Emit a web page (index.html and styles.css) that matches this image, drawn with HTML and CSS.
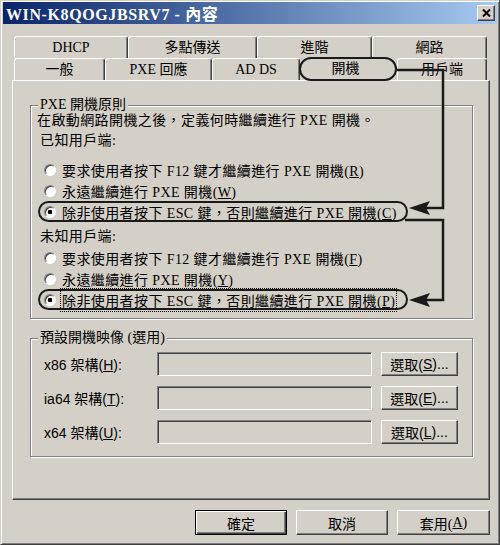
FILE: index.html
```html
<!DOCTYPE html>
<html lang="zh-Hant">
<head>
<meta charset="utf-8">
<title>WIN-K8QOGJBSRV7 - 內容</title>
<link rel="stylesheet" href="styles.css">
</head>
<body>
<div class="window">
  <div class="titlebar">
    <span class="title">WIN-K8QOGJBSRV7 - 內容</span>
    <span class="close"><svg width="9" height="8" viewBox="0 0 9 8"><path d="M1 0.5 L8 7.5 M8 0.5 L1 7.5" stroke="#000" stroke-width="2"/></svg></span>
  </div>
  <div class="main">
    <div class="tabs">
      <div class="tabrow row1">
        <div class="tab">DHCP</div>
        <div class="tab">多點傳送</div>
        <div class="tab">進階</div>
        <div class="tab">網路</div>
      </div>
      <div class="tabrow row2">
        <div class="tab">一般</div>
        <div class="tab">PXE 回應</div>
        <div class="tab">AD DS</div>
        <div class="tab sel">開機</div>
        <div class="tab">用戶端</div>
      </div>
    </div>
    <div class="panel">
      <div class="group g1">
        <div class="gtitle">PXE 開機原則</div>
        <div class="desc">在啟動網路開機之後，定義何時繼續進行 PXE 開機。</div>
        <div class="head head-known">已知用戶端:</div>
        <div class="rrow r-first"><span class="radio"></span><span>要求使用者按下 F12 鍵才繼續進行 PXE 開機(<u>R</u>)</span></div>
        <div class="rrow"><span class="radio"></span><span>永遠繼續進行 PXE 開機(<u>W</u>)</span></div>
        <div class="rrow marked"><span class="radio on"></span><span>除非使用者按下 ESC 鍵，否則繼續進行 PXE 開機(<u>C</u>)</span></div>
        <div class="head head-unknown">未知用戶端:</div>
        <div class="rrow r-second"><span class="radio"></span><span>要求使用者按下 F12 鍵才繼續進行 PXE 開機(<u>F</u>)</span></div>
        <div class="rrow"><span class="radio"></span><span>永遠繼續進行 PXE 開機(<u>Y</u>)</span></div>
        <div class="rrow marked"><span class="radio on"></span><span class="focus">除非使用者按下 ESC 鍵，否則繼續進行 PXE 開機(<u>P</u>)</span></div>
      </div>
      <div class="group g2">
        <div class="gtitle">預設開機映像 (選用)</div>
        <div class="frow f-first"><span class="flabel">x86 架構(<u>H</u>):</span><span class="textbox"></span><span class="btn small">選取(<u>S</u>)...</span></div>
        <div class="frow"><span class="flabel">ia64 架構(<u>T</u>):</span><span class="textbox"></span><span class="btn small">選取(<u>E</u>)...</span></div>
        <div class="frow"><span class="flabel">x64 架構(<u>U</u>):</span><span class="textbox"></span><span class="btn small">選取(<u>L</u>)...</span></div>
      </div>
    </div>
    <div class="buttons">
      <span class="btn big default">確定</span>
      <span class="btn big">取消</span>
      <span class="btn big wide">套用(<u>A</u>)</span>
    </div>
  </div>
  <svg class="arrows" width="500" height="545" viewBox="0 0 500 545">
    <path d="M397 70 H443 V208 H426" fill="none" stroke="#1a1a1a" stroke-width="2.5"/>
    <path d="M409 208 L430 201 L426 208 L430 215 Z" fill="#1a1a1a"/>
    <path d="M405 220 H443 V300 H426" fill="none" stroke="#1a1a1a" stroke-width="2.5"/>
    <path d="M409 300 L430 293 L426 300 L430 307 Z" fill="#1a1a1a"/>
  </svg>
</div>
</body>
</html>
```
FILE: styles.css
```css
body {
  margin: 0;
}

.window {
  position: relative;
  width: 500px;
  height: 545px;
  box-sizing: border-box;
  background: #d4d0c8;
  border: 1px solid;
  border-color: #d4d0c8 #404040 #404040 #d4d0c8;
  box-shadow: inset 1px 1px #fff, inset -1px -1px #808080;
  padding: 1px 2px 2px 2px;
  font-family: "Liberation Serif", "Noto Sans CJK TC", serif;
  font-size: 14px;
  color: #000;
}

.titlebar {
  height: 22px;
  display: flex;
  align-items: center;
  justify-content: space-between;
  background: linear-gradient(to right, #0a246a, #a6caf0);
  padding: 0 2px 0 3px;
}

.title {
  color: #fff;
  font-weight: bold;
  font-size: 16px;
  letter-spacing: 0.6px;
}

.close {
  width: 18px;
  height: 16px;
  box-sizing: border-box;
  background: #d4d0c8;
  border: 1px solid;
  border-color: #fff #404040 #404040 #fff;
  box-shadow: inset -1px -1px #808080;
  display: flex;
  align-items: center;
  justify-content: center;
}

.main {
  padding: 12px 7px 0 9px;
}

.tabs {
  margin-left: 2px;
  width: 473px;
}

.tabrow {
  display: grid;
  height: 22px;
}

.row1 {
  grid-template-columns: 114px 129px 115px 115px;
}

.row2 {
  grid-template-columns: 91px 107px 88px 97px 90px;
}

.tab {
  background: #d4d0c8;
  border-top: 1px solid #fff;
  border-left: 1px solid #fff;
  border-right: 1px solid #404040;
  box-shadow: inset -1px 0 #808080;
  border-radius: 3px 3px 0 0;
  display: flex;
  align-items: center;
  justify-content: center;
  line-height: 1;
}

.tab.sel {
  position: relative;
  border: none;
  box-shadow: none;
  background: #d4d0c8;
  padding-right: 6px;
  z-index: 2;
}

.tab.sel::after {
  content: "";
  position: absolute;
  left: -1px;
  right: 0;
  top: -1px;
  bottom: -1px;
  border: 2.5px solid #1a1a1a;
  border-radius: 12px;
}

.panel {
  height: 420px;
  width: 478px;
  box-sizing: border-box;
  border: 1px solid;
  border-color: #fff #404040 #404040 #fff;
  box-shadow: inset -1px -1px #808080;
  padding: 24px 16px 0 17px;
}

.group {
  border: 1px solid #808080;
  box-shadow: inset 1px 1px #fff, 1px 1px #fff;
}

.g1 {
  padding-bottom: 8px;
  letter-spacing: 0.4px;
}

.g2 {
  margin-top: 19px;
  padding-bottom: 12px;
}

.gtitle {
  width: fit-content;
  margin: -9px 0 0 7px;
  padding: 0 2px;
  height: 16px;
  line-height: 16px;
  background: #d4d0c8;
  letter-spacing: 0;
}

.desc {
  height: 16px;
  line-height: 16px;
  padding-left: 6px;
}

.head {
  height: 16px;
  line-height: 16px;
  padding-left: 9px;
}

.head-known {
  margin-top: 4px;
}

.head-unknown {
  margin-top: 7px;
}

.rrow {
  height: 21px;
  display: flex;
  align-items: center;
  padding-left: 13px;
  white-space: nowrap;
}

.r-first {
  margin-top: 10px;
}

.r-second {
  margin-top: 2px;
}

.rrow.marked {
  position: relative;
}

.rrow.marked::before {
  content: "";
  position: absolute;
  left: 7px;
  width: 370px;
  top: 0;
  bottom: 0;
  box-sizing: border-box;
  border: 2.5px solid #1a1a1a;
  border-radius: 11px;
}

.radio {
  width: 12px;
  height: 12px;
  box-sizing: border-box;
  border-radius: 50%;
  background: #fff;
  border: 1px solid;
  border-color: #808080 #fff #fff #808080;
  box-shadow: inset 1px 1px #404040;
  margin-right: 6px;
  flex: none;
}

.radio.on {
  background: radial-gradient(circle, #000 0, #000 2px, #fff 2.6px);
}

.focus {
  outline: 1px dotted #000;
  outline-offset: 1px;
}

.frow {
  display: flex;
  align-items: center;
  height: 24px;
  margin-top: 10px;
  padding-left: 13px;
  font-family: "Liberation Sans", "Noto Sans CJK TC", sans-serif;
}

.frow.f-first {
  margin-top: 6px;
}

.flabel {
  width: 113px;
  flex: none;
}

.textbox {
  width: 215px;
  height: 24px;
  box-sizing: border-box;
  border: 1px solid;
  border-color: #808080 #fff #fff #808080;
  box-shadow: inset 1px 1px #404040, inset -1px -1px #d4d0c8;
  background: #d4d0c8;
  margin-right: 9px;
  flex: none;
}

.btn {
  box-sizing: border-box;
  border: 1px solid;
  border-color: #fff #404040 #404040 #fff;
  box-shadow: inset -1px -1px #808080;
  display: flex;
  align-items: center;
  justify-content: center;
  background: #d4d0c8;
  flex: none;
}

.btn.small {
  width: 77px;
  height: 24px;
}

.buttons {
  margin-top: 10px;
  display: flex;
  justify-content: flex-end;
  gap: 9px;
}

.btn.big {
  width: 92px;
  height: 25px;
}

.btn.wide {
  width: 93px;
}

.btn.default {
  border-color: #000;
  box-shadow: inset 1px 1px #fff, inset -1px -1px #404040, inset -2px -2px #808080;
}

.arrows {
  position: absolute;
  left: -1px;
  top: -1px;
  pointer-events: none;
}
```
